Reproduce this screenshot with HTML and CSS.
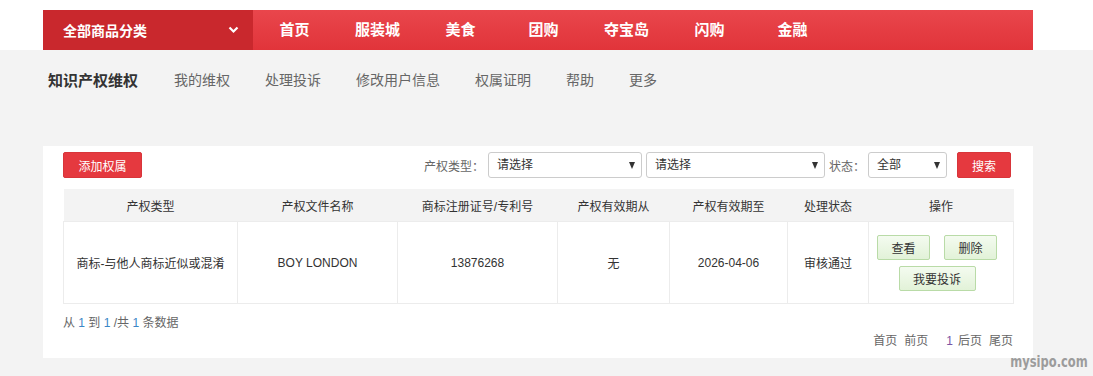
FILE: index.html
```html
<!DOCTYPE html>
<html lang="zh-CN">
<head>
    <meta charset="UTF-8">
    <title>知识产权维权</title>
    <link rel="stylesheet" href="styles.css">
</head>
<body>
    <!-- 顶部导航 -->
    <div class="header">
        <div class="nav-bar">
            <div class="category">
                <span>全部商品分类</span>
                <svg class="chevron" width="11" height="8" viewBox="0 0 11 8"><path d="M1.5 1.5 L5.5 5.5 L9.5 1.5" fill="none" stroke="#fff" stroke-width="2.2"/></svg>
            </div>
            <a class="nav-item">首页</a>
            <a class="nav-item">服装城</a>
            <a class="nav-item">美食</a>
            <a class="nav-item">团购</a>
            <a class="nav-item">夺宝岛</a>
            <a class="nav-item">闪购</a>
            <a class="nav-item">金融</a>
        </div>
    </div>

    <!-- 二级菜单 -->
    <div class="sub-nav">
        <a class="sub-item active">知识产权维权</a>
        <a class="sub-item">我的维权</a>
        <a class="sub-item">处理投诉</a>
        <a class="sub-item">修改用户信息</a>
        <a class="sub-item">权属证明</a>
        <a class="sub-item">帮助</a>
        <a class="sub-item">更多</a>
    </div>

    <!-- 内容 -->
    <div class="card">
        <div class="toolbar">
            <button class="btn-red add-btn">添加权属</button>
            <div class="filters">
                <span class="label">产权类型：</span>
                <div class="select select-type"><span>请选择</span><i class="arrow"></i></div>
                <div class="select select-sub"><span>请选择</span><i class="arrow"></i></div>
                <span class="label label-state">状态：</span>
                <div class="select select-state"><span>全部</span><i class="arrow"></i></div>
                <button class="btn-red search-btn">搜索</button>
            </div>
        </div>

        <table class="data-table">
            <colgroup>
                <col style="width:174px">
                <col style="width:160px">
                <col style="width:160px">
                <col style="width:112px">
                <col style="width:118px">
                <col style="width:81px">
                <col style="width:145px">
            </colgroup>
            <thead>
                <tr>
                    <th>产权类型</th>
                    <th>产权文件名称</th>
                    <th>商标注册证号/专利号</th>
                    <th>产权有效期从</th>
                    <th>产权有效期至</th>
                    <th>处理状态</th>
                    <th>操作</th>
                </tr>
            </thead>
            <tbody>
                <tr>
                    <td>商标-与他人商标近似或混淆</td>
                    <td>BOY LONDON</td>
                    <td>13876268</td>
                    <td>无</td>
                    <td>2026-04-06</td>
                    <td>审核通过</td>
                    <td>
                        <div class="actions">
                            <button class="btn-green">查看</button>
                            <button class="btn-green">删除</button>
                            <button class="btn-green wide">我要投诉</button>
                        </div>
                    </td>
                </tr>
            </tbody>
        </table>

        <div class="summary">从 <span class="num">1</span> 到 <span class="num">1</span> /共 <span class="num">1</span> 条数据</div>
        <div class="pager">
            <a>首页</a><a>前页</a><a class="current">1</a><a>后页</a><a>尾页</a>
        </div>
    </div>

    <div class="watermark">mysipo.com</div>
</body>
</html>
```

FILE: styles.css
```css
/* 页面整体 */
html, body {
    margin: 0;
    padding: 0;
}

body {
    background-color: #f3f3f3;
    font-family: "Liberation Sans", "Noto Sans CJK SC", sans-serif;
    color: #333;
    font-size: 12px;
}

a {
    cursor: pointer;
}

/* 顶部红色导航 */
.header {
    background-color: #fff;
    padding-top: 10px;
}

.nav-bar {
    display: flex;
    width: 990px;
    height: 40px;
    margin-left: 43px;
    background: linear-gradient(#e9464c, #e1343a);
}

.category {
    display: flex;
    align-items: center;
    justify-content: space-between;
    width: 210px;
    box-sizing: border-box;
    padding: 0 14px 0 20px;
    background-color: #c9282d;
    color: #fff;
    font-size: 14px;
    font-weight: bold;
}

.nav-item {
    width: 83px;
    line-height: 40px;
    text-align: center;
    color: #fff;
    font-size: 15px;
    font-weight: bold;
}

/* 二级菜单 */
.sub-nav {
    display: flex;
    align-items: center;
    gap: 35px;
    height: 58px;
    margin-left: 43px;
    padding-left: 5px;
}

.sub-item {
    font-size: 14px;
    color: #666;
}

.sub-item.active {
    font-size: 15px;
    font-weight: bold;
    color: #333;
    margin-right: 1px;
}

/* 白色内容区 */
.card {
    width: 950px;
    margin: 38px 0 0 43px;
    padding: 6px 20px 8px;
    background-color: #fff;
}

.toolbar {
    display: flex;
    justify-content: space-between;
    align-items: center;
    height: 26px;
}

.btn-red {
    height: 26px;
    padding: 0;
    border: 1px solid #d8353a;
    border-radius: 2px;
    background-color: #e5393f;
    color: #fff;
    font-family: inherit;
    font-size: 12px;
    cursor: pointer;
}

.add-btn {
    width: 79px;
}

.filters {
    display: flex;
    align-items: center;
    padding-right: 2px;
}

.label {
    color: #666;
    margin-right: 4px;
}

.label-state {
    margin: 0 3px 0 4px;
}

.select {
    position: relative;
    height: 26px;
    box-sizing: border-box;
    padding-left: 8px;
    border: 1px solid #ccc;
    border-radius: 3px;
    line-height: 24px;
    color: #333;
    background-color: #fff;
}

.select .arrow {
    position: absolute;
    right: 6px;
    top: 9px;
    border-left: 3px solid transparent;
    border-right: 3px solid transparent;
    border-top: 7px solid #333;
}

.select-type {
    width: 154px;
}

.select-sub {
    width: 179px;
    margin-left: 4px;
}

.select-state {
    width: 79px;
}

.search-btn {
    width: 54px;
    margin-left: 10px;
}

/* 表格 */
.data-table {
    width: 950px;
    margin-top: 11px;
    border-collapse: collapse;
    table-layout: fixed;
}

.data-table th {
    height: 32px;
    padding: 0;
    background-color: #f3f3f3;
    font-weight: normal;
    text-align: center;
}

.data-table td {
    height: 81px;
    padding: 0;
    border: 1px solid #ececec;
    text-align: center;
}

.actions {
    display: flex;
    flex-wrap: wrap;
    justify-content: center;
    gap: 6px 14px;
    padding-right: 8px;
}

.btn-green {
    width: 53px;
    height: 25px;
    padding: 0;
    border: 1px solid #b9dba7;
    border-radius: 2px;
    background: linear-gradient(#f4fbf0, #e2f2d8);
    color: #333;
    font-family: inherit;
    font-size: 12px;
    cursor: pointer;
}

.btn-green.wide {
    width: 77px;
}

/* 分页 */
.summary {
    margin-top: 10px;
    line-height: 18px;
    color: #666;
}

.summary .num {
    color: #3b86c6;
}

.pager {
    text-align: right;
    line-height: 18px;
    color: #666;
}

.pager a {
    margin-left: 7px;
}

.pager a.current {
    margin-left: 18px;
    margin-right: -2px;
    color: #7a55a4;
}

/* 水印 */
.watermark {
    position: absolute;
    right: 5px;
    bottom: 6px;
    line-height: 16px;
    font-family: "DejaVu Sans", sans-serif;
    font-weight: bold;
    font-size: 16px;
    color: #9c9c9c;
    transform: scaleX(0.72);
    transform-origin: right center;
}
```
